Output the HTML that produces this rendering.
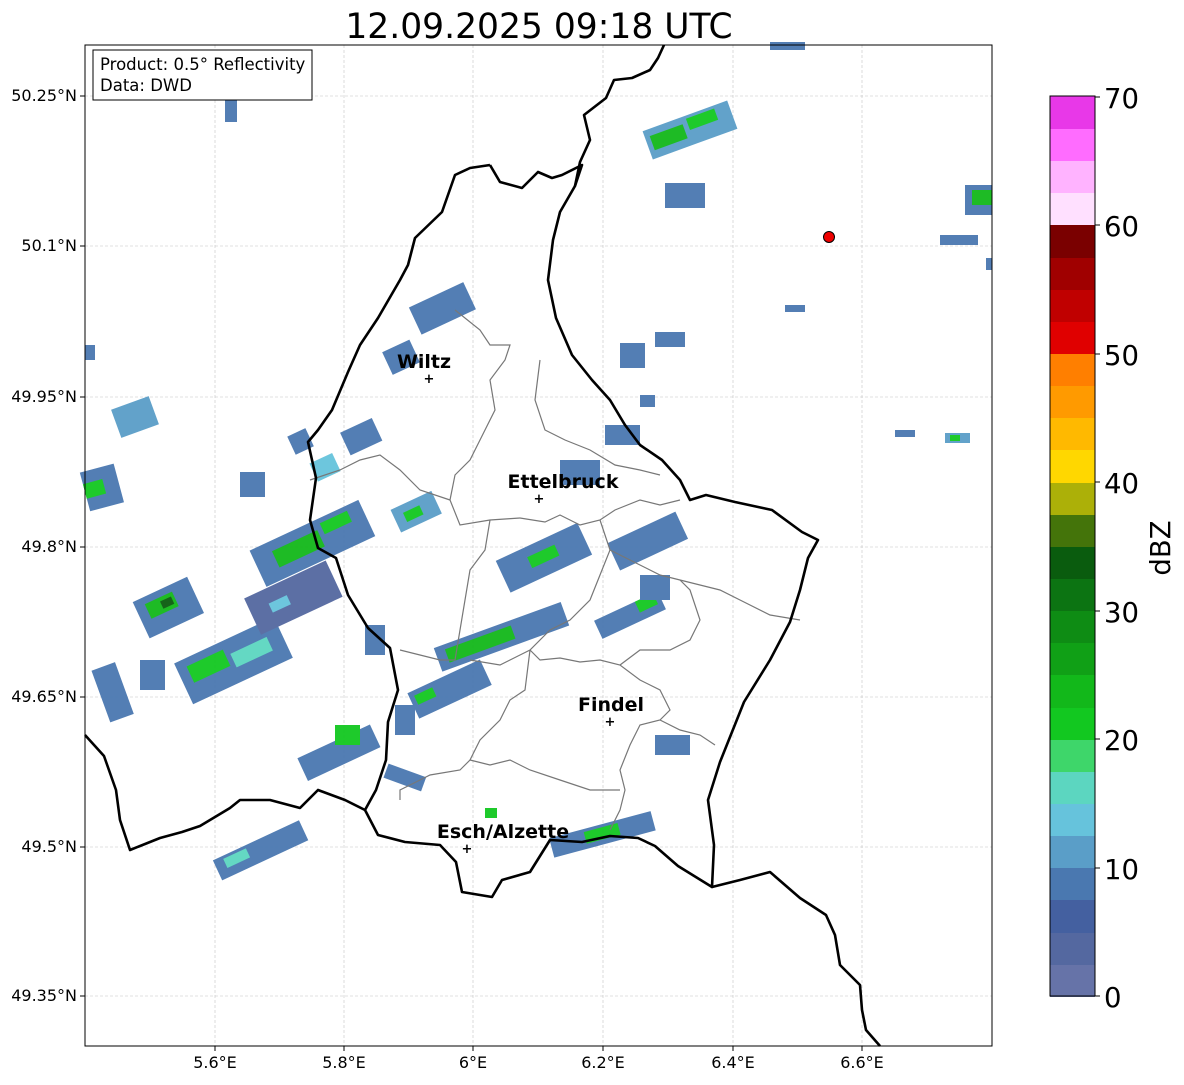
<!DOCTYPE html>
<html><head><meta charset="utf-8"><style>
body{margin:0;background:#fff;width:1184px;height:1081px;overflow:hidden;font-family:"DejaVu Sans",sans-serif}
</style></head><body>
<svg width="1184" height="1081" xmlns="http://www.w3.org/2000/svg" font-family="DejaVu Sans, sans-serif">
<text x="539" y="38" font-size="34.5" text-anchor="middle">12.09.2025 09:18 UTC</text>
<g stroke="#c4c4c4" stroke-width="0.6" stroke-dasharray="3,2">
<line x1="215" y1="45" x2="215" y2="1046"/><line x1="344" y1="45" x2="344" y2="1046"/><line x1="473" y1="45" x2="473" y2="1046"/><line x1="603" y1="45" x2="603" y2="1046"/><line x1="733" y1="45" x2="733" y2="1046"/><line x1="862" y1="45" x2="862" y2="1046"/>
<line x1="85" y1="96" x2="992" y2="96"/><line x1="85" y1="246" x2="992" y2="246"/><line x1="85" y1="397" x2="992" y2="397"/><line x1="85" y1="547" x2="992" y2="547"/><line x1="85" y1="697" x2="992" y2="697"/><line x1="85" y1="847" x2="992" y2="847"/><line x1="85" y1="996" x2="992" y2="996"/>
</g>
<g opacity="0.95">
<g transform="rotate(-25 175 610)"><rect x="140" y="585" width="60" height="40" fill="#4a78b0"/><rect x="150" y="592" width="30" height="16" fill="#12b81a"/><rect x="165" y="596" width="12" height="8" fill="#0a5c0e"/></g>
<g transform="rotate(-25 230 665)"><rect x="180" y="640" width="110" height="45" fill="#4a78b0"/><rect x="190" y="648" width="40" height="18" fill="#12c820"/><rect x="235" y="655" width="40" height="15" fill="#5cd6c0"/></g>
<g transform="rotate(-25 310 550)"><rect x="255" y="525" width="120" height="40" fill="#4a78b0"/><rect x="275" y="535" width="50" height="18" fill="#12b81a"/><rect x="330" y="530" width="30" height="12" fill="#12c820"/></g>
<g transform="rotate(-25 300 600)"><rect x="250" y="575" width="90" height="40" fill="#5468a0"/><rect x="270" y="590" width="20" height="10" fill="#66c3dc"/></g>
<g transform="rotate(-15 100 490)"><rect x="85" y="468" width="35" height="40" fill="#4a78b0"/><rect x="85" y="480" width="20" height="15" fill="#12c820"/></g>
<rect x="115" y="402" width="40" height="30" fill="#5a9ec8" transform="rotate(-20 135 417)"/>
<rect x="240" y="472" width="25" height="25" fill="#4a78b0"/>
<g transform="rotate(-20 500 640)"><rect x="435" y="625" width="135" height="25" fill="#4a78b0"/><rect x="445" y="630" width="70" height="14" fill="#12b81a"/></g>
<g transform="rotate(-25 450 690)"><rect x="410" y="675" width="80" height="28" fill="#4a78b0"/><rect x="415" y="680" width="20" height="10" fill="#12c820"/></g>
<g transform="rotate(-25 545 560)"><rect x="500" y="540" width="90" height="35" fill="#4a78b0"/><rect x="530" y="550" width="30" height="12" fill="#12c820"/></g>
<g transform="rotate(-25 650 540)"><rect x="610" y="525" width="75" height="30" fill="#4a78b0"/></g>
<g transform="rotate(-25 630 615)"><rect x="595" y="605" width="70" height="20" fill="#4a78b0"/><rect x="640" y="605" width="20" height="12" fill="#12c820"/></g>
<rect x="640" y="575" width="30" height="25" fill="#4a78b0"/>
<g transform="rotate(-25 360 440)"><rect x="345" y="425" width="35" height="25" fill="#4a78b0"/></g>
<g transform="rotate(-25 300 445)"><rect x="292" y="432" width="20" height="20" fill="#4a78b0"/></g>
<g transform="rotate(-25 330 465)"><rect x="312" y="455" width="25" height="20" fill="#66c3dc"/></g>
<g transform="rotate(-25 415 515)"><rect x="395" y="500" width="45" height="25" fill="#5a9ec8"/><rect x="405" y="508" width="18" height="10" fill="#12c820"/></g>
<g transform="rotate(-25 440 315)"><rect x="415" y="295" width="60" height="30" fill="#4a78b0"/></g>
<g transform="rotate(-25 400 355)"><rect x="385" y="345" width="30" height="25" fill="#4a78b0"/></g>
<g transform="rotate(-25 260 855)"><rect x="215" y="840" width="95" height="22" fill="#4a78b0"/><rect x="225" y="843" width="25" height="10" fill="#5cd6c0"/></g>
<g transform="rotate(-25 340 755)"><rect x="300" y="740" width="80" height="25" fill="#4a78b0"/></g>
<rect x="335" y="725" width="25" height="20" fill="#12c820"/>
<g transform="rotate(-15 600 835)"><rect x="550" y="825" width="105" height="20" fill="#4a78b0"/><rect x="585" y="828" width="35" height="12" fill="#12c820"/></g>
<rect x="485" y="808" width="12" height="10" fill="#12c820"/>
<g transform="rotate(-20 690 130)"><rect x="645" y="115" width="90" height="30" fill="#5a9ec8"/><rect x="650" y="122" width="35" height="15" fill="#12b81a"/><rect x="690" y="118" width="30" height="12" fill="#12c820"/></g>
<rect x="665" y="183" width="40" height="25" fill="#4a78b0"/>
<rect x="965" y="185" width="27" height="30" fill="#4a78b0"/><rect x="972" y="190" width="20" height="15" fill="#12b81a"/>
<rect x="940" y="235" width="38" height="10" fill="#4a78b0"/>
<rect x="620" y="343" width="25" height="25" fill="#4a78b0"/>
<rect x="655" y="332" width="30" height="15" fill="#4a78b0"/>
<rect x="605" y="425" width="35" height="20" fill="#4a78b0"/>
<rect x="655" y="735" width="35" height="20" fill="#4a78b0"/>
<rect x="945" y="433" width="25" height="10" fill="#5a9ec8"/><rect x="950" y="435" width="10" height="6" fill="#12c820"/>
<rect x="895" y="430" width="20" height="7" fill="#4a78b0"/>
<rect x="225" y="100" width="12" height="22" fill="#4a78b0"/>
<rect x="190" y="55" width="30" height="30" fill="#5468a0"/>
<rect x="770" y="42" width="35" height="8" fill="#4a78b0"/>
<rect x="100" y="665" width="25" height="55" fill="#4a78b0" transform="rotate(-20 112 692)"/>
<rect x="85" y="345" width="10" height="15" fill="#4a78b0"/>
<rect x="140" y="660" width="25" height="30" fill="#4a78b0"/>
<rect x="385" y="770" width="40" height="15" fill="#4a78b0" transform="rotate(20 405 777)"/>
<rect x="395" y="705" width="20" height="30" fill="#4a78b0"/>
<rect x="365" y="625" width="20" height="30" fill="#4a78b0"/>
<rect x="560" y="460" width="40" height="25" fill="#4a78b0"/>
<rect x="785" y="305" width="20" height="7" fill="#4a78b0"/>
<rect x="986" y="258" width="6" height="12" fill="#4a78b0"/>
<rect x="640" y="395" width="15" height="12" fill="#4a78b0"/>
</g>
<g fill="none" stroke="#777" stroke-width="1.2">
<polyline points="455,310 480,330 490,345 510,345 505,360 490,380 495,410 480,440 470,460 455,475 450,500 460,525 490,520 520,518 545,522 560,515 580,525 600,520 615,510 640,500 660,505 680,500"/>
<polyline points="310,480 340,470 360,460 380,455 400,470 420,490 450,500"/>
<polyline points="540,360 535,400 545,430 565,440 590,450 615,465 640,470 660,475"/>
<polyline points="490,520 485,550 470,570 465,600 460,630 455,660 440,660 420,655 400,650"/>
<polyline points="600,520 610,550 600,575 590,600 570,620 550,630 530,650 500,665 470,660"/>
<polyline points="610,550 630,560 660,575 680,580 700,585 720,590 740,600 770,615 800,620"/>
<polyline points="530,650 540,660 560,658 580,662 600,660 620,665 640,680 660,690 670,710 660,720 640,725 630,745 620,770 625,790 620,810 610,830"/>
<polyline points="530,650 525,690 510,700 500,720 480,740 470,760 460,770 430,775 420,780 400,790 400,800"/>
<polyline points="660,720 680,730 700,735 715,745"/>
<polyline points="470,760 490,765 510,760 530,770 560,780 590,790 620,790"/>
<polyline points="680,580 690,590 700,620 690,640 670,650 640,650 620,665"/>
</g>
<g fill="none" stroke="#000" stroke-width="2.6" stroke-linejoin="round">
<polyline points="490,165 470,168 455,175 442,212 415,238 408,265 400,280 378,318 360,345 348,372 332,410 318,430 308,442 316,478 310,520 318,548 336,558 348,595 368,628 390,648 398,690 388,722 386,760 376,790 365,810 378,835 405,842 440,845 456,862 462,892 492,897 502,880 530,872 550,840 582,842 610,836 638,838 655,846 678,866 712,887 714,845 708,800 720,762 744,702 770,660 790,622 800,590 808,558 818,540 802,532 772,510 735,502 706,495 690,500 680,480 662,460 640,445 625,425 610,400 592,380 572,355 556,318 548,280 553,240 560,212 575,186 582,165 562,175 552,178 538,172 522,188 500,182 490,165"/>
<polyline points="575,186 580,162 590,140 584,115 606,98 614,80 632,78 650,70 658,58 664,45"/>
<polyline points="85,735 104,756 116,790 120,820 130,850 160,838 182,832 200,826 230,808 240,800 270,800 300,808 318,790 345,800 365,810"/>
<polyline points="712,887 740,880 770,872 800,898 826,915 835,935 840,965 860,985 862,1010 866,1030 880,1046"/>
</g>
<rect x="85" y="45" width="907" height="1001" fill="none" stroke="#000" stroke-width="1"/>
<g stroke="#000"><line x1="80" y1="96" x2="85" y2="96"/><line x1="80" y1="246" x2="85" y2="246"/><line x1="80" y1="397" x2="85" y2="397"/><line x1="80" y1="547" x2="85" y2="547"/><line x1="80" y1="697" x2="85" y2="697"/><line x1="80" y1="847" x2="85" y2="847"/><line x1="80" y1="996" x2="85" y2="996"/>
<line x1="215" y1="1046" x2="215" y2="1051"/><line x1="344" y1="1046" x2="344" y2="1051"/><line x1="473" y1="1046" x2="473" y2="1051"/><line x1="603" y1="1046" x2="603" y2="1051"/><line x1="733" y1="1046" x2="733" y2="1051"/><line x1="862" y1="1046" x2="862" y2="1051"/></g>
<g font-size="19" font-weight="bold" text-anchor="middle">
<text x="424" y="368">Wiltz</text><text x="563" y="488">Ettelbruck</text><text x="611" y="711">Findel</text><text x="503" y="838">Esch/Alzette</text>
</g>
<g font-size="13" font-weight="bold" text-anchor="middle"><text x="429" y="383">+</text><text x="539" y="503">+</text><text x="610" y="726">+</text><text x="467" y="853">+</text></g>
<circle cx="829" cy="237" r="5.5" fill="#e00" stroke="#000" stroke-width="1"/>
<rect x="93" y="50" width="219" height="50" fill="#fff" stroke="#000" stroke-width="1"/>
<text x="100" y="70" font-size="16.5">Product: 0.5° Reflectivity</text>
<text x="100" y="91" font-size="16.5">Data: DWD</text>
<g font-size="16" text-anchor="end">
<text x="77" y="101">50.25°N</text><text x="77" y="251">50.1°N</text><text x="77" y="402">49.95°N</text><text x="77" y="552">49.8°N</text><text x="77" y="702">49.65°N</text><text x="77" y="852">49.5°N</text><text x="77" y="1001">49.35°N</text>
</g>
<g font-size="16" text-anchor="middle">
<text x="215" y="1068">5.6°E</text><text x="344" y="1068">5.8°E</text><text x="473" y="1068">6°E</text><text x="603" y="1068">6.2°E</text><text x="733" y="1068">6.4°E</text><text x="862" y="1068">6.6°E</text>
</g>
<g>
<rect x="1050" y="964" width="45" height="33" fill="#6673a8"/><rect x="1050" y="932" width="45" height="33" fill="#5468a0"/><rect x="1050" y="900" width="45" height="33" fill="#4460a0"/><rect x="1050" y="867" width="45" height="33" fill="#4a78b0"/><rect x="1050" y="835" width="45" height="33" fill="#5a9ec8"/><rect x="1050" y="803" width="45" height="33" fill="#66c3dc"/><rect x="1050" y="771" width="45" height="33" fill="#5cd6c0"/><rect x="1050" y="739" width="45" height="33" fill="#3ed66a"/><rect x="1050" y="707" width="45" height="33" fill="#12c820"/><rect x="1050" y="675" width="45" height="33" fill="#12b81a"/><rect x="1050" y="642" width="45" height="33" fill="#10a016"/><rect x="1050" y="610" width="45" height="33" fill="#0e8c14"/><rect x="1050" y="578" width="45" height="33" fill="#0c7412"/><rect x="1050" y="546" width="45" height="33" fill="#0a5c0e"/><rect x="1050" y="514" width="45" height="33" fill="#44740a"/><rect x="1050" y="482" width="45" height="33" fill="#acb008"/><rect x="1050" y="450" width="45" height="33" fill="#ffd700"/><rect x="1050" y="417" width="45" height="33" fill="#ffb900"/><rect x="1050" y="385" width="45" height="33" fill="#ff9a00"/><rect x="1050" y="353" width="45" height="33" fill="#ff7f00"/><rect x="1050" y="321" width="45" height="33" fill="#e00000"/><rect x="1050" y="289" width="45" height="33" fill="#c00000"/><rect x="1050" y="257" width="45" height="33" fill="#a00000"/><rect x="1050" y="225" width="45" height="33" fill="#7a0000"/><rect x="1050" y="192" width="45" height="33" fill="#ffe0ff"/><rect x="1050" y="160" width="45" height="33" fill="#ffb3ff"/><rect x="1050" y="128" width="45" height="33" fill="#ff6cff"/><rect x="1050" y="96" width="45" height="33" fill="#e838e8"/>
<rect x="1050" y="96" width="45" height="900" fill="none" stroke="#000" stroke-width="1"/>
</g>
<g font-size="27.5">
<text x="1104" y="1007">0</text><text x="1104" y="879">10</text><text x="1104" y="750">20</text><text x="1104" y="622">30</text><text x="1104" y="493">40</text><text x="1104" y="365">50</text><text x="1104" y="236">60</text><text x="1104" y="108">70</text>
</g>
<g stroke="#000"><line x1="1095" y1="996" x2="1100" y2="996"/><line x1="1095" y1="868" x2="1100" y2="868"/><line x1="1095" y1="739" x2="1100" y2="739"/><line x1="1095" y1="611" x2="1100" y2="611"/><line x1="1095" y1="482" x2="1100" y2="482"/><line x1="1095" y1="354" x2="1100" y2="354"/><line x1="1095" y1="225" x2="1100" y2="225"/><line x1="1095" y1="97" x2="1100" y2="97"/></g>
<text x="1170" y="548" font-size="27.5" text-anchor="middle" transform="rotate(-90 1170 548)">dBZ</text>
</svg>
</body></html>
